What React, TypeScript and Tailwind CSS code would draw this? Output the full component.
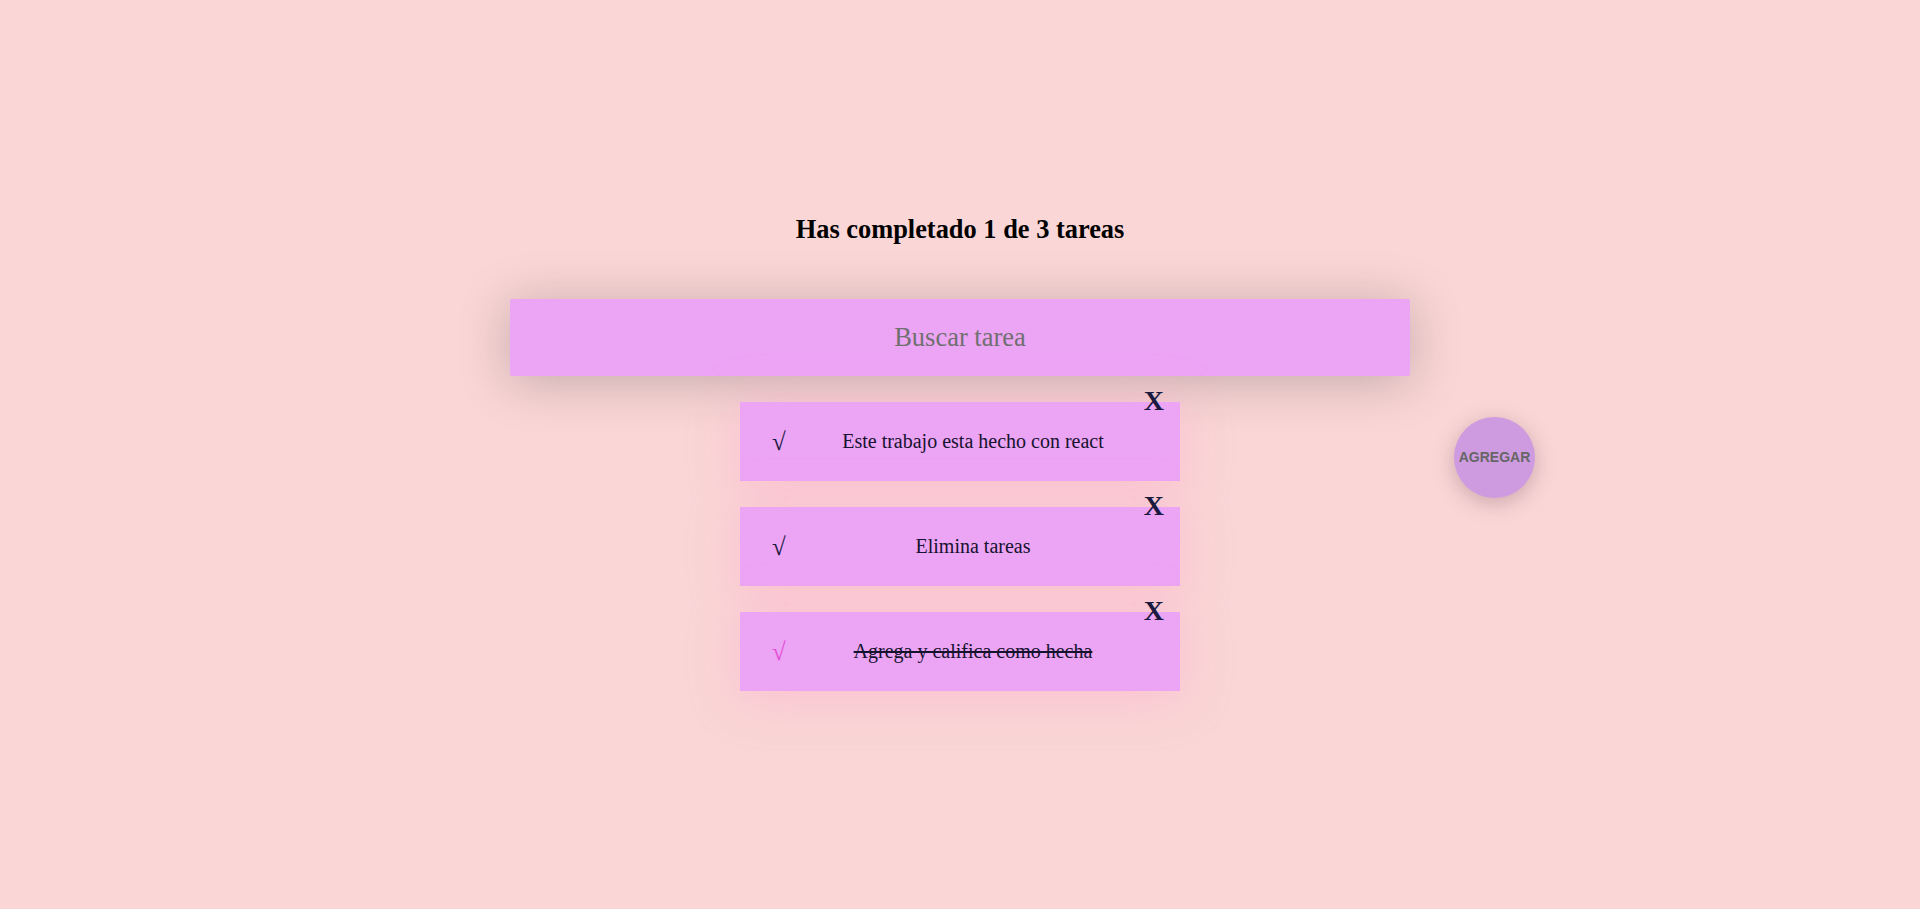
import React from 'react';

const todos = [
  { text: 'Este trabajo esta hecho con react', completed: false },
  { text: 'Elimina tareas', completed: false },
  { text: 'Agrega y califica como hecha', completed: true },
];

const TodoItem = ({ text, completed }: { text: string; completed: boolean }) => (
  <li className="relative flex h-[79px] w-[440px] items-center bg-[#eca4f5] shadow-[0_5px_50px_rgba(250,160,200,0.45)]">
    <span
      className={`absolute left-[32px] top-[27px] text-[25px] leading-none ${completed ? 'text-[#e24fd3]' : 'text-[#1a1a40]'}`}
    >
      √
    </span>
    <p
      className={`flex-1 pl-[26px] text-center text-[20px] text-[#15132e] ${completed ? 'line-through' : ''}`}
    >
      {text}
    </p>
    <span className="absolute right-[16px] top-[-15px] text-[28px] font-bold leading-none text-[#1a1a40]">X</span>
  </li>
);

export default function App() {
  const done = todos.filter((t) => t.completed).length;

  return (
    <div className="relative min-h-[909px] w-full bg-[#fad6d6] font-['Liberation_Serif',serif]">
      <div className="flex flex-col items-center pt-[214px]">
        <h1 className="text-[26.4px] font-bold leading-[1.2] text-black">
          Has completado {done} de {todos.length} tareas
        </h1>
        <input
          className="mt-[53px] h-[77px] w-[900px] rounded-[2px] bg-[#eca4f5] text-center text-[26.5px] text-[#6b6b6b] placeholder:text-[#707070] shadow-[0_5px_50px_rgba(32,35,41,0.25)] outline-none"
          placeholder="Buscar tarea"
        />
        <ul className="mt-[26px] flex flex-col gap-[26px]">
          {todos.map((t) => (
            <TodoItem key={t.text} text={t.text} completed={t.completed} />
          ))}
        </ul>
      </div>
      <button className="absolute left-[1454px] top-[417px] flex h-[81px] w-[81px] items-center justify-center rounded-full bg-[#cf9be0] font-['Liberation_Sans',sans-serif] text-[14px] font-bold text-[#666] shadow-[0_5px_20px_rgba(120,80,100,0.35)]">
        AGREGAR
      </button>
    </div>
  );
}
